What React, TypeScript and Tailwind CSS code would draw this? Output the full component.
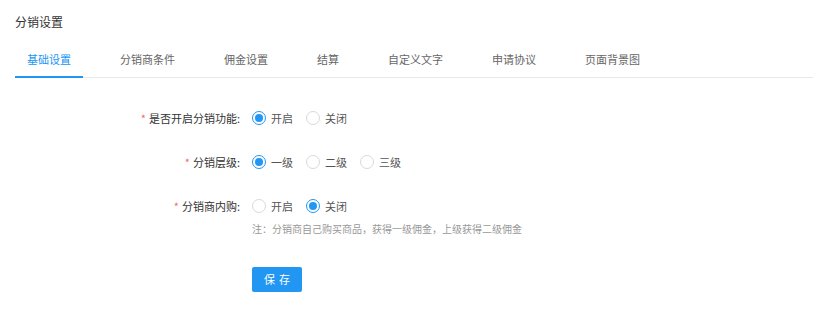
import { useState } from 'react';

const tabs = ['基础设置', '分销商条件', '佣金设置', '结算', '自定义文字', '申请协议', '页面背景图'];

function Radio({ checked, label, onClick }: { checked: boolean; label: string; onClick: () => void }) {
    return (
        <label onClick={onClick} className="flex items-center cursor-pointer mr-[13px]">
            <span
                className={`w-[14px] h-[14px] rounded-full border flex items-center justify-center bg-white ${
                    checked ? 'border-[#2196f3]' : 'border-[#d9d9d9]'
                }`}
            >
                {checked && <span className="w-[8px] h-[8px] rounded-full bg-[#2196f3]"></span>}
            </span>
            <span className="ml-[5px] text-[#555]">{label}</span>
        </label>
    );
}

function Row({ label, children }: { label: string; children: React.ReactNode }) {
    return (
        <div className="flex items-center h-[20px]">
            <div className="w-[240px] text-right text-[#333]">
                <span className="text-[#f56c6c] mr-[3px]">*</span>
                {label}:
            </div>
            <div className="ml-[12px] flex items-center">{children}</div>
        </div>
    );
}

export default function App() {
    const [enabled, setEnabled] = useState(0);
    const [level, setLevel] = useState(0);
    const [inner, setInner] = useState(1);

    return (
        <div className="w-[813px] h-[313px] bg-white text-[11px] overflow-hidden" style={{ fontFamily: '"Noto Sans CJK SC", "Liberation Sans", sans-serif' }}>
            {/* 标题 */}
            <div className="pl-[15px] pt-[13px] text-[12px] text-[#333] leading-[18px]">分销设置</div>

            {/* 标签页 */}
            <div className="mt-[14px] ml-[15px] flex border-b border-[#e8e8e8] h-[33px]">
                {tabs.map((t, i) => (
                    <div
                        key={t}
                        className={`px-3 mr-[25px] flex items-center pb-[2px] -mb-px border-b-2 ${
                            i === 0 ? 'text-[#2196f3] border-[#2196f3]' : 'text-[#666] border-transparent'
                        }`}
                    >
                        {t}
                    </div>
                ))}
            </div>

            {/* 表单 */}
            <div className="mt-[30px] flex flex-col">
                <Row label="是否开启分销功能">
                    <Radio checked={enabled === 0} label="开启" onClick={() => setEnabled(0)} />
                    <Radio checked={enabled === 1} label="关闭" onClick={() => setEnabled(1)} />
                </Row>
                <div className="h-[24px]"></div>
                <Row label="分销层级">
                    <Radio checked={level === 0} label="一级" onClick={() => setLevel(0)} />
                    <Radio checked={level === 1} label="二级" onClick={() => setLevel(1)} />
                    <Radio checked={level === 2} label="三级" onClick={() => setLevel(2)} />
                </Row>
                <div className="h-[24px]"></div>
                <Row label="分销商内购">
                    <Radio checked={inner === 0} label="开启" onClick={() => setInner(0)} />
                    <Radio checked={inner === 1} label="关闭" onClick={() => setInner(1)} />
                </Row>
                <div className="ml-[252px] mt-[5px] text-[10px] text-[#999]">注：分销商自己购买商品，获得一级佣金，上级获得二级佣金</div>
                <div className="ml-[252px] mt-[31px]">
                    <button className="w-[50px] h-[25px] rounded-[2px] bg-[#2196f3] text-white text-[11px] tracking-[4px] pl-[4px]">保存</button>
                </div>
            </div>
        </div>
    );
}
